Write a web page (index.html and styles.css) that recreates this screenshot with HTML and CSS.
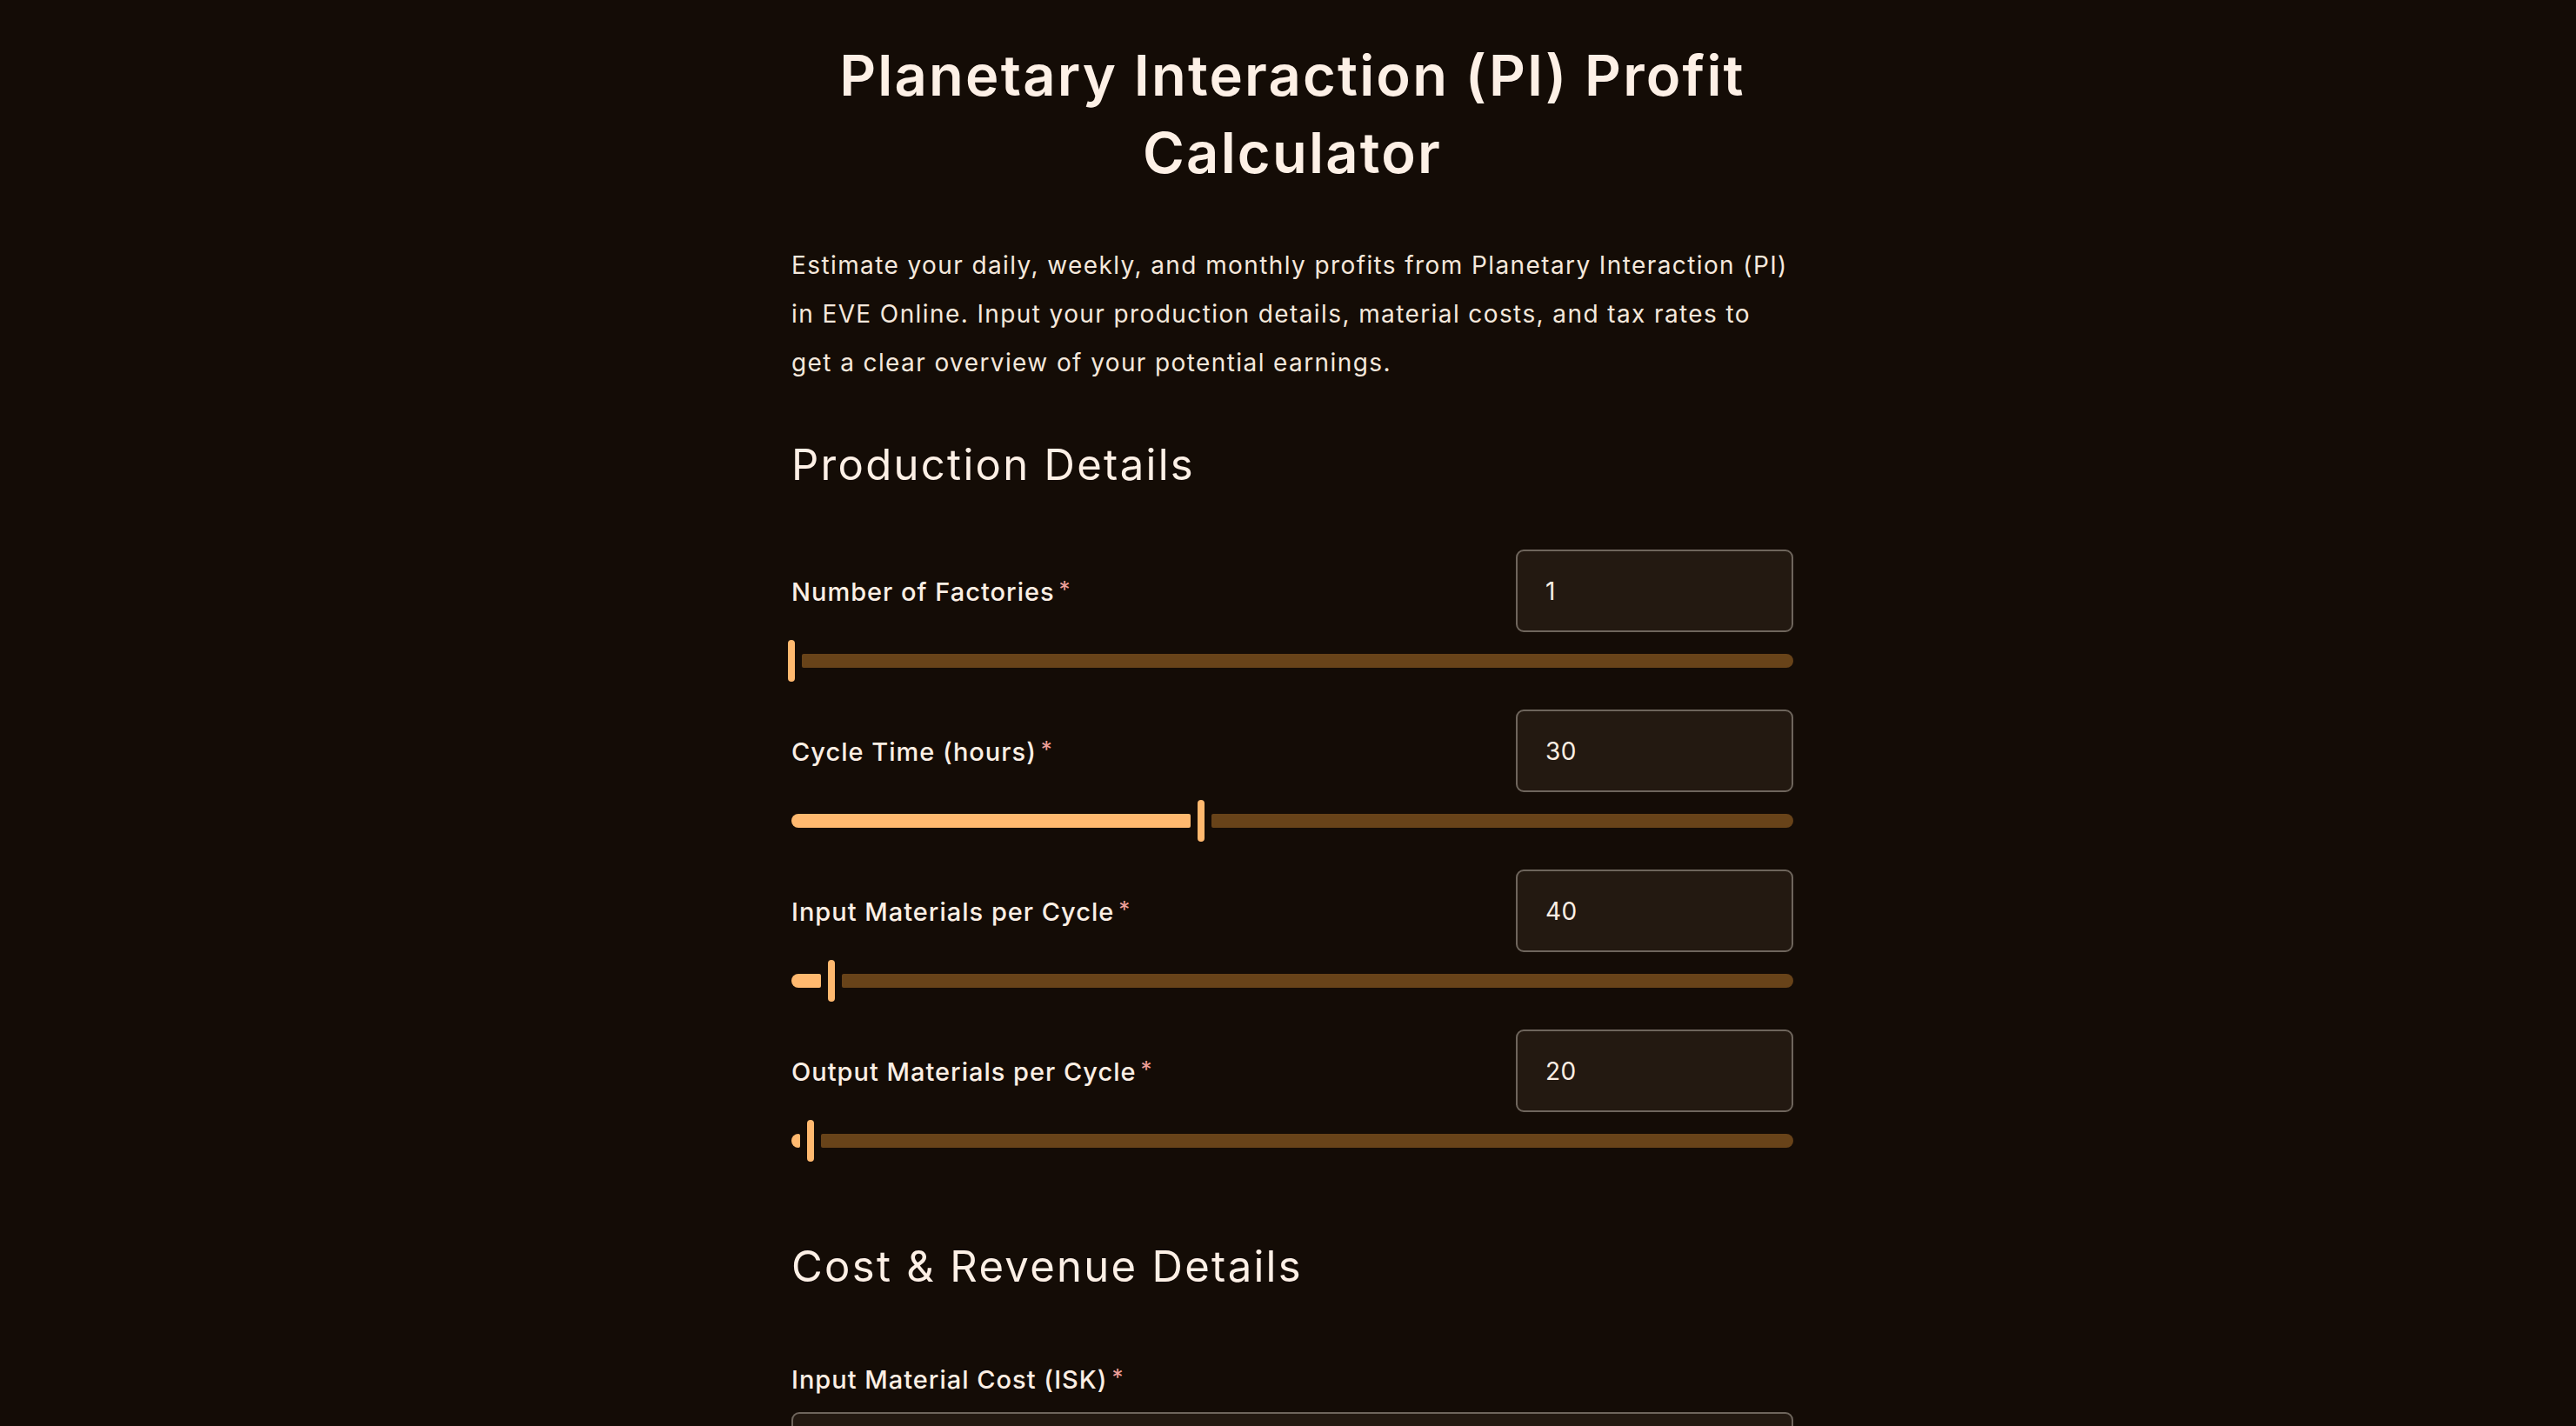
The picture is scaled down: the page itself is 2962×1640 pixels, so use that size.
FILE: index.html
```html
<!DOCTYPE html>
<html lang="en">
<head>
<meta charset="utf-8">
<title>Planetary Interaction (PI) Profit Calculator</title>
<link rel="stylesheet" href="styles.css">
</head>
<body>
<main class="page">
  <h1 class="title">Planetary Interaction (PI) Profit Calculator</h1>
  <p class="intro">Estimate your daily, weekly, and monthly profits from Planetary Interaction (PI) in EVE Online. Input your production details, material costs, and tax rates to get a clear overview of your potential earnings.</p>

  <section class="section">
    <h2 class="section-title">Production Details</h2>
    <div class="fields">
      <div class="field">
        <div class="field-head">
          <label class="label">Number of Factories<span class="req">*</span></label>
          <div class="num-input">1</div>
        </div>
        <div class="slider" style="--p:0%">
          <div class="track-active"></div>
          <div class="thumb"></div>
          <div class="track-rest"></div>
        </div>
      </div>
      <div class="field">
        <div class="field-head">
          <label class="label">Cycle Time (hours)<span class="req">*</span></label>
          <div class="num-input">30</div>
        </div>
        <div class="slider" style="--p:40.85%">
          <div class="track-active"></div>
          <div class="thumb"></div>
          <div class="track-rest"></div>
        </div>
      </div>
      <div class="field">
        <div class="field-head">
          <label class="label">Input Materials per Cycle<span class="req">*</span></label>
          <div class="num-input">40</div>
        </div>
        <div class="slider" style="--p:3.95%">
          <div class="track-active"></div>
          <div class="thumb"></div>
          <div class="track-rest"></div>
        </div>
      </div>
      <div class="field">
        <div class="field-head">
          <label class="label">Output Materials per Cycle<span class="req">*</span></label>
          <div class="num-input">20</div>
        </div>
        <div class="slider" style="--p:1.9%">
          <div class="track-active"></div>
          <div class="thumb"></div>
          <div class="track-rest"></div>
        </div>
      </div>
    </div>
  </section>

  <section class="section section-cost">
    <h2 class="section-title">Cost &amp; Revenue Details</h2>
    <div class="field-stack">
      <label class="label">Input Material Cost (ISK)<span class="req">*</span></label>
      <div class="wide-input"></div>
    </div>
  </section>
</main>
</body>
</html>
```
FILE: styles.css
```css
html, body {
  margin: 0;
  padding: 0;
  background: #140c06;
  height: 100%;
  overflow: hidden;
}
body {
  padding-left: 10px;
  color: #fcefe4;
  font-family: "Inter", "Liberation Sans", sans-serif;
}
.page {
  width: 1152px;
  margin: 0 auto;
  padding-top: 42px;
}
.title {
  margin: 0;
  text-align: center;
  font-size: 65px;
  line-height: 89px;
  font-weight: 600;
  letter-spacing: 2.2px;
  color: #fdf0e6;
}
.intro {
  margin: 57px 0 0;
  font-size: 28px;
  line-height: 56px;
  letter-spacing: 1.4px;
  color: #f5e8dc;
}
.section {
  margin-top: 57px;
}
.section-cost {
  margin-top: 88px;
}
.section-title {
  margin: 0 0 64px;
  font-size: 49px;
  line-height: 66px;
  font-weight: 400;
  letter-spacing: 2.3px;
  color: #fdf0e6;
}
.section-cost .section-title {
  margin-bottom: 71px;
}
.fields {
  display: flex;
  flex-direction: column;
  gap: 32px;
}
.field {
  display: flex;
  flex-direction: column;
  gap: 9px;
}
.field-head {
  display: flex;
  align-items: center;
  justify-content: space-between;
}
.label {
  font-size: 29px;
  line-height: 46px;
  letter-spacing: 1px;
  font-weight: 500;
  color: #fcefe4;
}
.req {
  color: #ee9f99;
  font-size: 26px;
  font-weight: 400;
  vertical-align: 4px;
  margin-left: 5px;
}
.num-input {
  box-sizing: border-box;
  width: 319px;
  height: 95px;
  padding: 0 32px;
  display: flex;
  align-items: center;
  background: #231911;
  border: 2px solid #6e655c;
  border-radius: 9px;
  font-size: 28px;
  letter-spacing: 0.5px;
  color: #fcefe4;
}
.slider {
  display: flex;
  align-items: center;
  height: 48px;
}
.track-active {
  flex: none;
  width: max(0px, calc(var(--p) - 12px));
  height: 16px;
  background: #ffb96f;
  border-radius: 8px 2px 2px 8px;
}
.thumb {
  flex: none;
  width: 8px;
  height: 48px;
  margin-left: min(8px, calc(var(--p) - 4px));
  margin-right: 8px;
  background: #ffb96f;
  border-radius: 4px;
}
.track-rest {
  flex: 1;
  height: 16px;
  background: #684319;
  border-radius: 2px 8px 8px 2px;
}
.field-stack {
  display: flex;
  flex-direction: column;
  gap: 14px;
}
.wide-input {
  box-sizing: border-box;
  height: 95px;
  background: #231911;
  border: 2px solid #6e655c;
  border-radius: 9px;
}
```
